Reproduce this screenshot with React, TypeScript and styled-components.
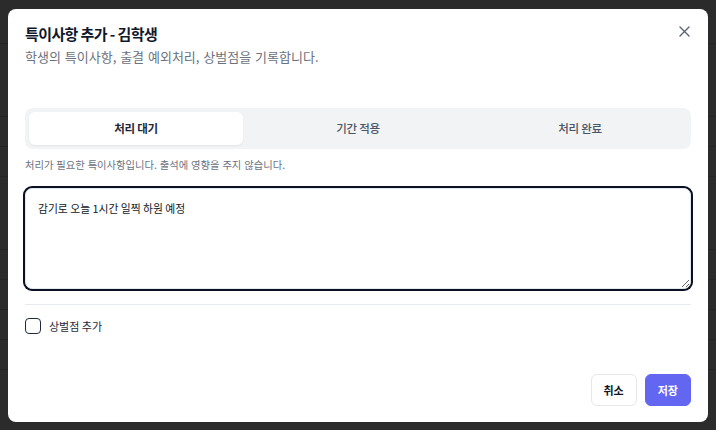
import React, { useState } from 'react'
import styled, { createGlobalStyle } from 'styled-components'

const GlobalStyle = createGlobalStyle`
  html, body {
    margin: 0;
    padding: 0;
    height: 100%;
  }
  body {
    font-family: 'Noto Sans CJK KR', 'Noto Sans', sans-serif;
    color: #111827;
    background: #ffffff;
  }
  * {
    box-sizing: border-box;
  }
`

const Page = styled.div`
  height: 430px;
  overflow: hidden;
  background: #ffffff;
  padding-top: 14px;
`

const PageRow = styled.div<{ $tall?: boolean }>`
  height: ${(p) => (p.$tall ? '73px' : '30px')};
  border-bottom: 1px solid #d7dbe2;
`

const Overlay = styled.div`
  position: fixed;
  inset: 0;
  background: rgba(0, 0, 0, 0.83);
  display: flex;
  align-items: center;
  justify-content: center;
`

const Dialog = styled.div`
  position: relative;
  width: 700px;
  background: #ffffff;
  border-radius: 8px;
  padding: 14px 17px 16px;
  display: flex;
  flex-direction: column;
`

const Title = styled.h2`
  margin: 0;
  font-size: 15px;
  line-height: 22px;
  font-weight: 700;
  letter-spacing: -0.6px;
  color: #0f172a;
`

const Subtitle = styled.p`
  margin: 2px 0 0;
  font-size: 13px;
  line-height: 20px;
  word-spacing: 1px;
  color: #6b7280;
`

const CloseButton = styled.button`
  position: absolute;
  top: 14px;
  right: 15px;
  width: 18px;
  height: 18px;
  padding: 0;
  border: 0;
  background: transparent;
  color: #5b6270;
  display: flex;
  align-items: center;
  justify-content: center;
  cursor: pointer;
`

const TabList = styled.div`
  margin-top: 41px;
  display: grid;
  grid-template-columns: repeat(3, 1fr);
  gap: 8px;
  padding: 4px;
  background: #f1f3f5;
  border-radius: 8px;
`

const Tab = styled.button<{ $active?: boolean }>`
  height: 33px;
  border: 0;
  border-radius: 6px;
  font-family: inherit;
  font-size: 11.5px;
  letter-spacing: -0.3px;
  font-weight: ${(p) => (p.$active ? 700 : 500)};
  color: ${(p) => (p.$active ? '#1f2937' : '#4b5563')};
  background: ${(p) => (p.$active ? '#ffffff' : 'transparent')};
  box-shadow: ${(p) => (p.$active ? '0 1px 2px rgba(15, 23, 42, 0.06)' : 'none')};
  cursor: pointer;
`

const Hint = styled.p`
  margin: 8px 0 0;
  font-size: 10.3px;
  line-height: 16px;
  word-spacing: 0.6px;
  color: #6b7280;
`

const NoteField = styled.textarea`
  display: block;
  margin-top: 15px;
  width: 100%;
  height: 101px;
  padding: 10px 12px;
  border: 1px solid #e2e8f0;
  border-radius: 7px;
  box-shadow: 0 0 0 2px #0b1120;
  font-family: inherit;
  font-size: 10.8px;
  line-height: 18px;
  color: #111827;
  resize: vertical;
  outline: none;
`

const Divider = styled.hr`
  margin: 15px 0 0;
  border: 0;
  border-top: 1px solid #e6eaf1;
`

const CheckRow = styled.label`
  margin-top: 13px;
  display: flex;
  align-items: center;
  gap: 8px;
  height: 16px;
  font-size: 11px;
  line-height: 16px;
  color: #1f2937;
  cursor: pointer;
`

const CheckBox = styled.span<{ $checked?: boolean }>`
  width: 16px;
  height: 16px;
  border: 1.5px solid #1e293b;
  border-radius: 4px;
  background: ${(p) => (p.$checked ? '#1e293b' : '#ffffff')};
`

const Footer = styled.div`
  margin-top: 40px;
  display: flex;
  justify-content: flex-end;
  gap: 8px;
`

const Button = styled.button<{ $primary?: boolean }>`
  height: 32px;
  padding: 0 12px;
  border-radius: 6px;
  font-family: inherit;
  font-size: 11px;
  font-weight: 700;
  border: 1px solid ${(p) => (p.$primary ? '#6366f1' : '#e5e7eb')};
  background: ${(p) => (p.$primary ? '#6366f1' : '#ffffff')};
  color: ${(p) => (p.$primary ? '#ffffff' : '#111827')};
  cursor: pointer;
`

const tabs = ['처리 대기', '기간 적용', '처리 완료']

const hints: Record<string, string> = {
  '처리 대기': '처리가 필요한 특이사항입니다. 출석에 영향을 주지 않습니다.',
  '기간 적용': '지정한 기간 동안 출결 예외로 처리됩니다.',
  '처리 완료': '처리가 완료된 특이사항입니다.',
}

const CloseIcon = () => (
  <svg width="11" height="11" viewBox="0 0 11 11" fill="none">
    <path d="M1 1L10 10M10 1L1 10" stroke="currentColor" strokeWidth="1.4" strokeLinecap="round" />
  </svg>
)

// rows of the list page sitting behind the dialog
const pageRows = [false, true, false, false, true, false, false, false, false]

export default function App() {
  const [tab, setTab] = useState(tabs[0])
  const [penalty, setPenalty] = useState(false)

  return (
    <>
      <GlobalStyle />
      <Page>
        {pageRows.map((tall, i) => (
          <PageRow key={i} $tall={tall} />
        ))}
      </Page>
      <Overlay>
        <Dialog role="dialog">
          <Title>특이사항 추가 - 김학생</Title>
          <Subtitle>학생의 특이사항, 출결 예외처리, 상벌점을 기록합니다.</Subtitle>
          <CloseButton aria-label="닫기">
            <CloseIcon />
          </CloseButton>

          <TabList>
            {tabs.map((t) => (
              <Tab key={t} $active={t === tab} onClick={() => setTab(t)}>
                {t}
              </Tab>
            ))}
          </TabList>
          <Hint>{hints[tab]}</Hint>

          <NoteField defaultValue="감기로 오늘 1시간 일찍 하원 예정" />

          <Divider />

          <CheckRow onClick={() => setPenalty(!penalty)}>
            <CheckBox $checked={penalty} />
            상벌점 추가
          </CheckRow>

          <Footer>
            <Button>취소</Button>
            <Button $primary>저장</Button>
          </Footer>
        </Dialog>
      </Overlay>
    </>
  )
}
